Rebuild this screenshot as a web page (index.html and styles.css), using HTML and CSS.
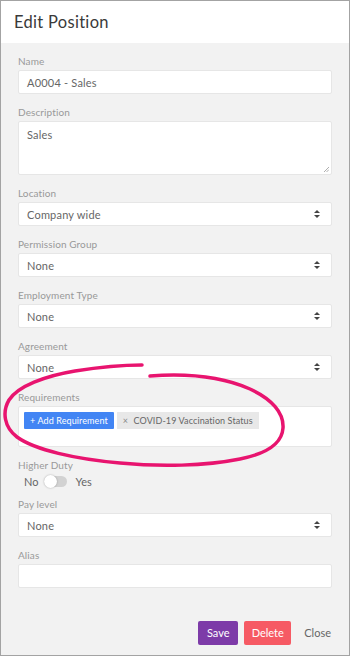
FILE: index.html
```html
<!DOCTYPE html>
<html>
<head>
<meta charset="utf-8">
<link rel="stylesheet" href="styles.css">
</head>
<body>
<div class="modal">
  <div class="header"><h1 class="title">Edit Position</h1></div>
  <div class="content">
    <div class="field">
      <div class="label">Name</div>
      <div class="input">A0004 - Sales</div>
    </div>
    <div class="field">
      <div class="label">Description</div>
      <div class="input textarea">Sales
        <svg class="grip" width="6" height="6" viewBox="0 0 6 6"><path d="M1 6 L6 1 M3.5 6 L6 3.5" stroke="#999" stroke-width="0.8"/></svg>
      </div>
    </div>
    <div class="field">
      <div class="label">Location</div>
      <div class="input select"><span>Company wide</span><span class="arrows"></span></div>
    </div>
    <div class="field">
      <div class="label">Permission Group</div>
      <div class="input select"><span>None</span><span class="arrows"></span></div>
    </div>
    <div class="field">
      <div class="label">Employment Type</div>
      <div class="input select"><span>None</span><span class="arrows"></span></div>
    </div>
    <div class="field">
      <div class="label">Agreement</div>
      <div class="input select"><span>None</span><span class="arrows"></span></div>
    </div>
    <div class="field">
      <div class="label">Requirements</div>
      <div class="input reqbox">
        <span class="add-btn">+ Add Requirement</span>
        <span class="tag"><span class="x">×</span> COVID-19 Vaccination Status</span>
      </div>
    </div>
    <div class="field toggle-field">
      <div class="label">Higher Duty</div>
      <div class="toggle-row"><span>No</span><span class="switch"><span class="knob"></span></span><span>Yes</span></div>
    </div>
    <div class="field">
      <div class="label">Pay level</div>
      <div class="input select"><span>None</span><span class="arrows"></span></div>
    </div>
    <div class="field">
      <div class="label">Alias</div>
      <div class="input"></div>
    </div>
    <div class="actions">
      <span class="btn save">Save</span>
      <span class="btn delete">Delete</span>
      <span class="btn close">Close</span>
    </div>
  </div>
  <svg class="scribble" width="350" height="656" viewBox="0 0 350 656">
    <path d="M150 376 C190 373 225 378 250 389 C272 399 284 413 283 428 C282 444 265 454 240 459 C205 466 160 467 120 463 C75 459 35 450 17 437 C4 427 2 412 9 400 C18 386 45 376 75 371 C100 367 122 365 142 365" fill="none" stroke="#e8146f" stroke-width="3.5" stroke-linecap="round"/>
  </svg>
</div>
</body>
</html>
```
FILE: styles.css
```css
* { box-sizing: border-box; }
html, body { margin: 0; padding: 0; }
body { font-family: Lato, "Noto Sans", sans-serif; }
.modal {
  position: relative;
  width: 350px;
  height: 656px;
  border: 1px solid #a3a3a3;
  background: #f2f2f2;
  overflow: hidden;
}
.header {
  background: #fff;
  height: 42px;
  padding: 0 13px;
  display: flex;
  align-items: center;
}
.title {
  margin: 0;
  font-size: 16.5px;
  font-weight: 400;
  color: #3a3a3a;
  letter-spacing: 0.3px;
}
.content {
  padding: 12px 17px 0 17px;
}
.field { margin-bottom: 12px; }
.label {
  font-size: 10px;
  line-height: 12px;
  color: #999;
  margin-bottom: 3px;
  letter-spacing: 0.1px;
}
.input {
  position: relative;
  height: 24px;
  background: #fff;
  border: 1px solid #e6e6e6;
  border-radius: 2px;
  font-size: 11px;
  color: #666;
  padding: 0 8px;
  display: flex;
  align-items: center;
  letter-spacing: 0.2px;
}
.textarea {
  height: 54px;
  align-items: flex-start;
  padding-top: 6px;
}
.grip { position: absolute; right: 2px; bottom: 2px; }
.select { justify-content: space-between; }
.arrows {
  position: relative;
  width: 6px;
  height: 8px;
  margin-right: 3px;
}
.arrows::before, .arrows::after {
  content: "";
  position: absolute;
  left: 0;
  border-left: 3px solid transparent;
  border-right: 3px solid transparent;
}
.arrows::before { top: 0; border-bottom: 3px solid #444; }
.arrows::after { bottom: 0; border-top: 3px solid #444; }
.reqbox {
  height: 41px;
  align-items: flex-start;
  padding: 5px 5px;
  gap: 3px;
  letter-spacing: 0;
}
.add-btn {
  background: #4285f4;
  color: #fff;
  font-size: 9px;
  height: 17px;
  line-height: 17px;
  padding: 0 6px;
  border-radius: 1px;
  letter-spacing: 0.1px;
}
.tag {
  background: #e8e8e8;
  color: #666;
  font-size: 9px;
  height: 17px;
  line-height: 17px;
  padding: 0 6px;
  letter-spacing: 0.1px;
}
.tag .x { margin-right: 3px; color: #888; }
.toggle-field { margin-bottom: 10px; }
.toggle-row {
  display: flex;
  align-items: center;
  gap: 6px;
  height: 14px;
  padding-left: 6px;
  font-size: 11px;
  color: #666;
}
.switch {
  position: relative;
  width: 23px;
  height: 11px;
  border-radius: 6px;
  background: #d2d2d2;
  margin-right: 2px;
}
.knob {
  position: absolute;
  left: 0;
  top: -1px;
  width: 13px;
  height: 13px;
  border-radius: 50%;
  background: #fff;
  box-shadow: 0 0 2px rgba(0,0,0,0.3);
}
.actions {
  display: flex;
  justify-content: flex-end;
  align-items: center;
  gap: 5px;
  margin-top: 33px;
  padding-right: 1px;
}
.btn {
  height: 24px;
  line-height: 24px;
  font-size: 11px;
  padding: 0 8px;
  border-radius: 2px;
  color: #fff;
}
.save { background: #7d3ba8; width: 40px; text-align: center; padding: 0; }
.delete { background: #f65a64; width: 47px; text-align: center; padding: 0; margin-left: 1px; }
.close { color: #666; padding: 0 0 0 8px; }
.scribble { position: absolute; left: -1px; top: -1px; pointer-events: none; }
```
